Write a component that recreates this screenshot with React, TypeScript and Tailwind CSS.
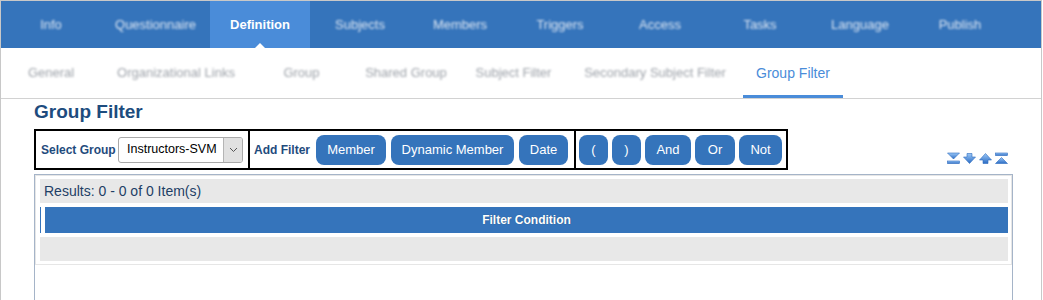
import React from "react"

const topTabs = [
  { label: "Info", w: "w-[100px]" },
  { label: "Questionnaire", w: "w-[109px]" },
  { label: "Definition", w: "w-[100px]", active: true },
  { label: "Subjects", w: "w-[100px]" },
  { label: "Members", w: "w-[100px]" },
  { label: "Triggers", w: "w-[100px]" },
  { label: "Access", w: "w-[100px]" },
  { label: "Tasks", w: "w-[100px]" },
  { label: "Language", w: "w-[100px]" },
  { label: "Publish", w: "w-[100px]" },
]

const subTabs = [
  { label: "General", w: "w-[100px]" },
  { label: "Organizational Links", w: "w-[150px]" },
  { label: "Group", w: "w-[101px]" },
  { label: "Shared Group", w: "w-[108px]" },
  { label: "Subject Filter", w: "w-[107px]" },
  { label: "Secondary Subject Filter", w: "w-[176px]" },
  { label: "Group Filter", w: "w-[100px]", active: true },
]

const btn = "flex h-[30px] items-center justify-center rounded-[8px] bg-[#3574bb] pt-[1px] text-[13px] text-white"

function ArrowIcon({ kind }: { kind: "bottom" | "down" | "up" | "top" }) {
  const id = `g-${kind}`
  return (
    <svg width="13" height="13" viewBox="0 0 13 13">
      <defs>
        <linearGradient id={id} x1="0" y1="0" x2="0" y2="1">
          <stop offset="0" stopColor="#9cc8f7" />
          <stop offset="1" stopColor="#2b6cc4" />
        </linearGradient>
      </defs>
      {kind === "bottom" && (
        <>
          <path d="M0.5 1 H12.5 L6.5 7 Z" fill={`url(#${id})`} stroke="#2e6bbf" strokeWidth="0.6" />
          <rect x="0.5" y="9" width="12" height="2.5" fill={`url(#${id})`} stroke="#2e6bbf" strokeWidth="0.6" />
        </>
      )}
      {kind === "down" && (
        <path d="M4 1.5 H9 V5 H12.5 L6.5 11.5 L0.5 5 H4 Z" fill={`url(#${id})`} stroke="#2e6bbf" strokeWidth="0.6" />
      )}
      {kind === "up" && (
        <path d="M4 11.5 H9 V8 H12.5 L6.5 1.5 L0.5 8 H4 Z" fill={`url(#${id})`} stroke="#2e6bbf" strokeWidth="0.6" />
      )}
      {kind === "top" && (
        <>
          <rect x="0.5" y="1" width="12" height="2.5" fill={`url(#${id})`} stroke="#2e6bbf" strokeWidth="0.6" />
          <path d="M0.5 11.5 H12.5 L6.5 5.5 Z" fill={`url(#${id})`} stroke="#2e6bbf" strokeWidth="0.6" />
        </>
      )}
    </svg>
  )
}

export default function App() {
  return (
    <div className="h-[300px] w-[1043px] overflow-hidden bg-white font-['Liberation_Sans',Arial,sans-serif]">
      <div className="h-[330px] w-[1042px] border border-[#c8c8c8]">
        {/* Main tabs */}
        <nav className="flex h-[47px] bg-[#3574bb]">
          {topTabs.map((t) => (
            <div
              key={t.label}
              className={`relative flex items-center justify-center ${t.w} ${t.active ? "bg-[#4a8cd9]" : ""}`}
            >
              {t.active ? (
                <span className="text-[13px] font-bold text-white">{t.label}</span>
              ) : (
                <span className="text-[13px] text-[#dce6f3] blur-[0.8px]">{t.label}</span>
              )}
              {t.active && (
                <span className="absolute bottom-0 left-1/2 -translate-x-1/2 border-x-[5px] border-b-[5px] border-x-transparent border-b-white" />
              )}
            </div>
          ))}
        </nav>

        {/* Sub tabs */}
        <div className="flex h-[51px] border-b border-[#d2d2d2]">
          {subTabs.map((t) => (
            <div
              key={t.label}
              className={`flex items-center justify-center border-b-[3px] pt-[3px] ${t.w} ${
                t.active ? "border-[#4a8cd9]" : "border-transparent"
              }`}
            >
              {t.active ? (
                <span className="text-[14px] text-[#4a8cd9]">{t.label}</span>
              ) : (
                <span className="text-[13px] text-[#9ea3aa] blur-[0.9px]">{t.label}</span>
              )}
            </div>
          ))}
        </div>

        <div className="ml-[33px] w-[979px]">
          <h1 className="mt-[2px] text-[19px] leading-[22px] font-bold text-[#1d4c7e]">Group Filter</h1>

          <div className="mt-[6px] flex items-end justify-between">
            {/* Toolbar */}
            <div className="flex h-[41px] border-2 border-black">
              <div className="flex w-[214px] items-center border-r-2 border-black pl-[5px]">
                <span className="text-[12px] font-bold text-[#1f4b7d]">Select Group</span>
                <div className="ml-auto mr-[5px] flex h-[26px] w-[125px] overflow-hidden rounded-[3px] border border-[#a9a9a9] bg-white">
                  <span className="flex flex-1 items-center pl-[8px] text-[12.5px] text-black">Instructors-SVM</span>
                  <span className="flex w-[19px] items-center justify-center border-l border-[#b5b5b5] bg-[#e1e1e1]">
                    <svg width="9" height="6" viewBox="0 0 9 6">
                      <path d="M1 1 L4.5 4.5 L8 1" fill="none" stroke="#555" strokeWidth="1" />
                    </svg>
                  </span>
                </div>
              </div>
              <div className="flex w-[326px] items-center gap-[5px] border-r-2 border-black pl-[4px]">
                <span className="w-[57px] text-[12px] font-bold text-[#1f4b7d]">Add Filter</span>
                <button className={`${btn} w-[70px]`}>Member</button>
                <button className={`${btn} w-[123px]`}>Dynamic Member</button>
                <button className={`${btn} w-[49px]`}>Date</button>
              </div>
              <div className="flex w-[210px] items-center gap-[4px] pl-[3px]">
                <button className={`${btn} w-[29px]`}>(</button>
                <button className={`${btn} w-[29px]`}>)</button>
                <button className={`${btn} w-[46px]`}>And</button>
                <button className={`${btn} w-[40px]`}>Or</button>
                <button className={`${btn} w-[43px]`}>Not</button>
              </div>
            </div>

            <div className="mb-[5px] mr-[5px] flex gap-[3px]">
              <ArrowIcon kind="bottom" />
              <ArrowIcon kind="down" />
              <ArrowIcon kind="up" />
              <ArrowIcon kind="top" />
            </div>
          </div>

          {/* Results grid */}
          <div className="mt-[4px] h-[140px] border border-[#a5b4c8]">
            <div className="border border-[#e6e6e6] pt-[3px] pr-[3px] pb-[3px] pl-[4px]">
              <div className="flex h-[24px] items-center bg-[#e8e8e8] pl-[4px] text-[14px] text-[#1e3f66]">
                Results: 0 - 0 of 0 Item(s)
              </div>
              <div className="mt-[4px] flex h-[26px]">
                <div className="w-[1px] bg-[#3574bb]" />
                <div className="ml-[4px] flex flex-1 items-center justify-center bg-[#3574bb] text-[12px] font-bold text-white [text-shadow:0_0_1px_rgba(0,0,0,0.35)]">
                  Filter Condition
                </div>
              </div>
              <div className="mt-[4px] h-[24px] bg-[#e8e8e8]" />
            </div>
          </div>
        </div>
      </div>
    </div>
  )
}
